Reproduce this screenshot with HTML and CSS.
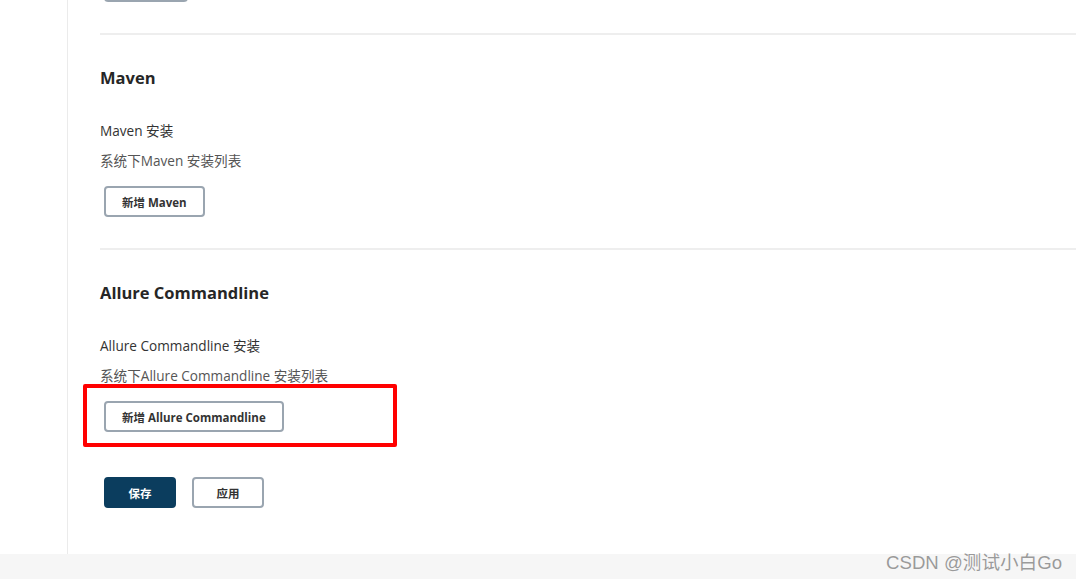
FILE: index.html
```html
<!DOCTYPE html>
<html lang="zh">
<head>
<meta charset="utf-8">
<link rel="stylesheet" href="styles.css">
</head>
<body>
<div class="page">
  <aside class="side"></aside>
  <main class="main">
    <div class="top-stub"><button class="btn btn-line top-btn" aria-label="新增"></button></div>
    <section class="section">
      <h2 class="title">Maven</h2>
      <div class="label">Maven 安装</div>
      <div class="desc">系统下Maven 安装列表</div>
      <button class="btn btn-line">新增 Maven</button>
    </section>
    <section class="section">
      <h2 class="title">Allure Commandline</h2>
      <div class="label">Allure Commandline 安装</div>
      <div class="desc">系统下Allure Commandline 安装列表</div>
      <div class="mark-wrap">
        <button class="btn btn-line">新增 Allure Commandline</button>
        <span class="mark"></span>
      </div>
    </section>
    <div class="actions">
      <button class="btn btn-primary">保存</button>
      <button class="btn btn-line btn-apply">应用</button>
    </div>
  </main>
</div>
<footer class="footer"><span class="wm">CSDN @测试小白Go</span></footer>
</body>
</html>
```
FILE: styles.css
```css
* { box-sizing: border-box; }
html, body { margin: 0; padding: 0; background: #fff; }
body {
  font-family: "Open Sans", "Noto Sans", "Noto Sans CJK SC", sans-serif;
  color: #333;
  width: 1076px;
  height: 579px;
  overflow: hidden;
}
.page { display: flex; height: 554px; }
.side { width: 68px; border-right: 1px solid #ebebeb; flex: none; }
.main { flex: 1; padding-left: 32px; overflow: hidden; }
.top-stub { height: 33px; padding-left: 0; display: flex; align-items: flex-start; }
.btn.top-btn { margin-top: -29px; width: 84px; }
.section {
  border-top: 2px solid #eeeeee;
  padding-top: 31px;
  padding-bottom: 31px;
}
.section + .section { padding-bottom: 13px; }
.title {
  margin: 0;
  font-size: 16.5px;
  line-height: 24px;
  font-weight: 700;
  color: #262626;
}
.label {
  margin-top: 31px;
  font-size: 13.6px;
  line-height: 20px;
  color: #333;
}
.desc {
  margin-top: 10px;
  font-size: 13.6px;
  line-height: 20px;
  color: #555;
  margin-bottom: 15px;
}
.btn {
  display: inline-flex;
  align-items: center;
  justify-content: center;
  height: 31px;
  padding: 0 16px;
  font-family: inherit;
  font-size: 11.5px;
  font-weight: 700;
  border-radius: 4px;
  margin-left: 4px;
  cursor: pointer;
}
.btn-line { background: #fff; border: 2px solid #9aa5b0; color: #333; }
.btn-primary { background: #0b3d5e; border: 2px solid #0b3d5e; color: #fff; width: 72px; }
.btn-apply { width: 72px; }
.mark-wrap { position: relative; }
.mark {
  position: absolute;
  left: -17px;
  top: -17px;
  width: 314px;
  height: 63px;
  border: 4px solid #ff0000;
  border-radius: 2px;
  pointer-events: none;
}
.actions { display: flex; padding-top: 32px; }
.actions .btn { margin-left: 4px; }
.actions .btn-apply { margin-left: 16px; }
.footer {
  height: 25px;
  background: #f6f6f6;
  display: flex;
  justify-content: flex-end;
  align-items: center;
  padding-right: 14px;
}
.wm {
  font-family: "Liberation Sans", "Noto Sans CJK SC", sans-serif;
  font-size: 18.6px;
  color: #9a9a9a;
  margin-top: -12px;
  text-shadow: 0 0 1px #fff;
}
```
